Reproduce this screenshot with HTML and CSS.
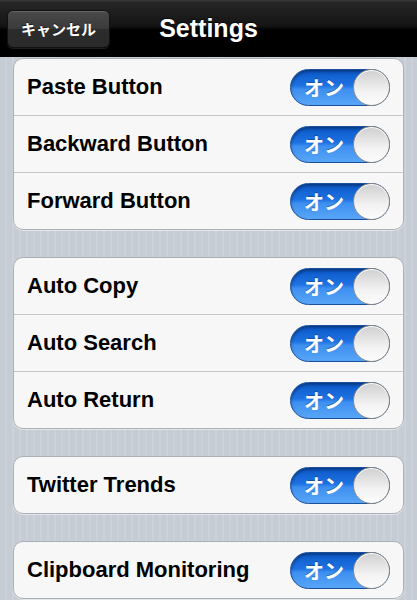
FILE: index.html
```html
<!DOCTYPE html>
<html lang="ja">
<head>
<meta charset="utf-8">
<title>Settings</title>
<link rel="stylesheet" href="styles.css">
</head>
<body>
<header class="navbar">
  <button class="cancel">キャンセル</button>
  <h1 class="title">Settings</h1>
  <span class="spacer"></span>
</header>
<main class="content">
  <section class="group">
    <div class="row"><span class="label">Paste Button</span><span class="switch"><span class="on-text">オン</span><span class="knob"></span></span></div>
    <div class="row"><span class="label">Backward Button</span><span class="switch"><span class="on-text">オン</span><span class="knob"></span></span></div>
    <div class="row"><span class="label">Forward Button</span><span class="switch"><span class="on-text">オン</span><span class="knob"></span></span></div>
  </section>
  <section class="group">
    <div class="row"><span class="label">Auto Copy</span><span class="switch"><span class="on-text">オン</span><span class="knob"></span></span></div>
    <div class="row"><span class="label">Auto Search</span><span class="switch"><span class="on-text">オン</span><span class="knob"></span></span></div>
    <div class="row"><span class="label">Auto Return</span><span class="switch"><span class="on-text">オン</span><span class="knob"></span></span></div>
  </section>
  <section class="group">
    <div class="row"><span class="label">Twitter Trends</span><span class="switch"><span class="on-text">オン</span><span class="knob"></span></span></div>
  </section>
  <section class="group">
    <div class="row"><span class="label">Clipboard Monitoring</span><span class="switch"><span class="on-text">オン</span><span class="knob"></span></span></div>
  </section>
</main>
</body>
</html>
```
FILE: styles.css
```css
* { box-sizing: border-box; }
html, body { margin: 0; padding: 0; }
body {
  width: 417px;
  height: 600px;
  overflow: hidden;
  font-family: "Liberation Sans", Arial, "Noto Sans CJK JP", sans-serif;
  background: repeating-linear-gradient(90deg, #c5ccd4 0, #c5ccd4 5px, #cbd2d9 5px, #cbd2d9 7px);
}
.navbar {
  height: 57px;
  display: grid;
  grid-template-columns: 1fr auto 1fr;
  align-items: center;
  padding: 0 7px;
  background: linear-gradient(#3d3d3d 0, #262626 2px, #141414 26px, #000 30px, #000 100%);
  border-bottom: 1px solid #000;
}
.cancel {
  justify-self: start;
  height: 38px;
  width: 103px;
  margin-top: 1px;
  border: 1px solid #111;
  border-radius: 6px;
  background: linear-gradient(#4a4a4a, #3a3a3a 50%, #2c2c2c 51%, #2a2a2a);
  box-shadow: inset 0 1px 0 rgba(255,255,255,0.15), 0 1px 0 rgba(255,255,255,0.12);
  color: #fff;
  font-family: "Noto Sans CJK JP", sans-serif;
  font-weight: 700;
  font-size: 15px;
  padding: 0;
  text-shadow: 0 -1px 0 rgba(0,0,0,0.6);
}
.title {
  margin: 0;
  color: #fff;
  font-size: 25px;
  font-weight: 700;
  text-shadow: 0 -1px 0 rgba(0,0,0,0.7);
}
.content {
  padding: 1px 13px 0;
  display: flex;
  flex-direction: column;
  gap: 27px;
}
.group {
  background: #f7f7f7;
  border: 1px solid #acafb3;
  border-radius: 10px;
  box-shadow: 0 1px 0 rgba(255,255,255,0.5);
}
.row {
  height: 57px;
  display: flex;
  align-items: center;
  justify-content: space-between;
  padding: 0 13px 0 13px;
  border-top: 1px solid #c6c6c6;
}
.row:first-child { border-top: none; height: 56px; }
.label {
  font-size: 22px;
  font-weight: 700;
  color: #000;
}
.switch {
  position: relative;
  width: 100px;
  height: 37px;
  border-radius: 19px;
  border: 1px solid #1b4f9a;
  background: linear-gradient(#0a58c8 0, #1f72e2 45%, #3d8ff0 55%, #58a6f8 100%);
  box-shadow: inset 0 2px 3px rgba(0,0,0,0.35);
  display: flex;
  align-items: center;
}
.on-text {
  padding-left: 13px;
  color: #fff;
  font-family: "Noto Sans CJK JP", sans-serif;
  font-weight: 700;
  font-size: 20px;
  text-shadow: 0 -1px 0 rgba(0,0,0,0.3);
}
.knob {
  position: absolute;
  right: -1px;
  top: -1px;
  width: 37px;
  height: 37px;
  border-radius: 50%;
  border: 1px solid #8a8a8a;
  background: linear-gradient(#cfcfcf, #f2f2f2 60%, #fcfcfc);
  box-shadow: inset 0 1px 0 #fff;
}
```
